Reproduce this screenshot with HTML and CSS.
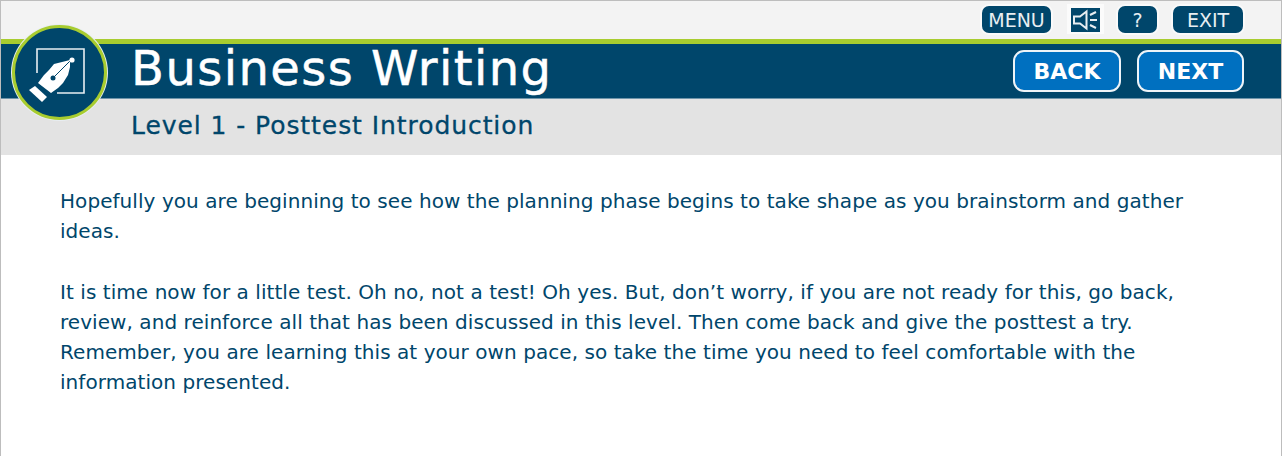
FILE: index.html
```html
<!DOCTYPE html>
<html lang="en">
<head>
    <meta charset="UTF-8">
    <meta name="viewport" content="width=device-width, initial-scale=1.0">
    <title>Business Writing</title>
    <link rel="stylesheet" href="styles.css">
</head>
<body>
    <div class="page">
        <div class="topbar">
            <button class="tool tool-menu">MENU</button>
            <div class="sound">
                <svg width="29" height="24" viewBox="0 0 29 24">
                    <rect width="29" height="24" fill="#00466b"/>
                    <path d="M3 8.5H9L15.5 3.5V20.5L9 15.5H3Z" fill="none" stroke="#e8eef2" stroke-width="2"/>
                    <path d="M19 7L25 4M19 12H26M19 17L25 20" stroke="#e8eef2" stroke-width="2"/>
                </svg>
            </div>
            <button class="tool tool-help">?</button>
            <button class="tool tool-exit">EXIT</button>
        </div>

        <div class="titlebar">
            <h1>Business Writing</h1>
            <div class="nav">
                <button class="nav-btn nav-back">BACK</button>
                <button class="nav-btn">NEXT</button>
            </div>
        </div>

        <div class="subbar">
            <h2>Level 1 - Posttest Introduction</h2>
        </div>

        <!-- round logo sits over the bars -->
        <div class="logo">
            <svg width="95" height="95" viewBox="12 25 95 95">
                <path d="M37 73V49H84V93H57" fill="none" stroke="#e8eef2" stroke-width="1.6"/>
                <path d="M70 60L62 62L54 64L49 70L44 75L38 83L51 93L58 88L63 83L68 75L70 67Z" fill="#fff"/>
                <path d="M70 61L53 78" stroke="#00466b" stroke-width="1"/>
                <circle cx="53" cy="78" r="2.5" fill="#00466b"/>
                <circle cx="72" cy="60" r="2.6" fill="#fff"/>
                <path d="M29 90L35 86L47 97L42 102Z" fill="#fff"/>
            </svg>
        </div>

        <div class="content">
            <p>Hopefully you are beginning to see how the planning phase begins to take shape as you brainstorm and gather ideas.</p>
            <p>It is time now for a little test. Oh no, not a test! Oh yes. But, don’t worry, if you are not ready for this, go back, review, and reinforce all that has been discussed in this level. Then come back and give the posttest a try. Remember, you are learning this at your own pace, so take the time you need to feel comfortable with the information presented.</p>
        </div>
    </div>
</body>
</html>
```

FILE: styles.css
```css
html, body {
    margin: 0;
    padding: 0;
    background-color: #fff;
}
.page {
    position: relative;
    height: 456px;
    box-sizing: border-box;
    border: 1px solid #bdbdbd;
    border-bottom: none;
    font-family: "DejaVu Sans", Verdana, sans-serif;
    overflow: hidden;
}
.topbar {
    height: 38px;
    box-sizing: border-box;
    background-color: #f3f3f3;
    display: flex;
    justify-content: flex-end;
    align-items: flex-start;
    padding: 5px 38px 0 0;
}
.tool {
    height: 27px;
    padding: 0;
    border: none;
    border-radius: 7px;
    background-color: #00466b;
    color: #e8eef2;
    box-shadow: 0 0 0 2px #fafafa;
    font-family: "DejaVu Sans", Verdana, sans-serif;
    font-size: 19px;
}
.tool-menu {
    width: 69px;
}
.tool-help {
    width: 39px;
    margin-left: 14px;
}
.tool-exit {
    width: 70px;
    margin-left: 16px;
}
.sound {
    margin-left: 16px;
    margin-top: -2px;
    padding: 4px 4px 2px;
    background-color: #fbfbfb;
}
.sound svg {
    display: block;
}
.titlebar {
    height: 60px;
    box-sizing: border-box;
    background-color: #00466b;
    border-top: 5px solid #a8cc2f;
    border-bottom: 1px solid #6f95aa;
    display: flex;
    justify-content: space-between;
    padding: 0 37px 0 130px;
}
.titlebar h1 {
    margin: 0;
    color: #fff;
    font-size: 48px;
    font-weight: normal;
    letter-spacing: 1.45px;
    line-height: 48px;
    -webkit-text-stroke: 0.5px #fff;
}
.nav {
    display: flex;
    gap: 16px;
    padding-top: 6px;
}
.nav-btn {
    width: 107px;
    height: 42px;
    padding: 0;
    border: 2px solid #eef4f8;
    border-radius: 11px;
    background-color: #0070c0;
    color: #fff;
    font-family: "DejaVu Sans", Verdana, sans-serif;
    font-size: 22px;
    font-weight: bold;
}
.nav-back {
    width: 108px;
}
.subbar {
    height: 56px;
    box-sizing: border-box;
    background-color: #e3e3e3;
    padding: 11px 0 0 130px;
}
.subbar h2 {
    margin: 0;
    color: #00466b;
    font-size: 25px;
    font-weight: normal;
    letter-spacing: 0.93px;
    line-height: 32px;
    -webkit-text-stroke: 0.3px #00466b;
}
.logo {
    position: absolute;
    left: 11px;
    top: 24px;
    width: 95px;
    height: 95px;
    box-sizing: border-box;
    border: 3px solid #a8cc2f;
    border-radius: 50%;
    background-color: #00466b;
    box-shadow: 0 0 0 1px #e8eef2;
}
.logo svg {
    display: block;
    margin: -3px;
}
.content {
    padding: 31px 60px 0 59px;
    color: #00466b;
    font-size: 20px;
    letter-spacing: 0.06px;
    line-height: 30.2px;
}
.content p {
    margin: 0 0 30.2px;
}
```
